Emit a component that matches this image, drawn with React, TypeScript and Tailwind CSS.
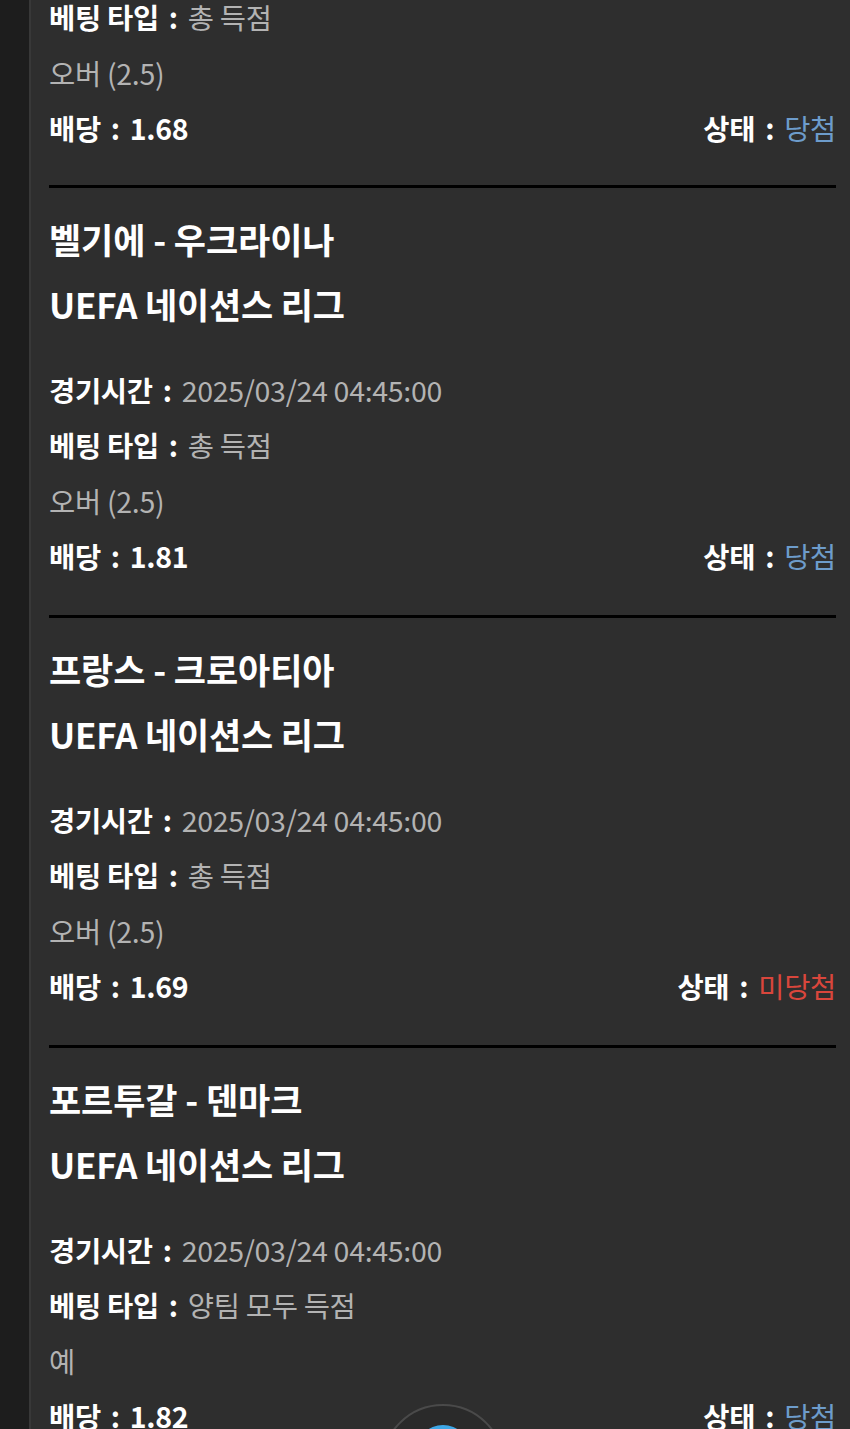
import React from 'react';

type Bet = {
  match: string;
  league: string;
  time: string;
  betType: string;
  pick: string;
  odds: string;
  won: boolean;
};

const bets: Bet[] = [
  {
    match: '벨기에 - 우크라이나',
    league: 'UEFA 네이션스 리그',
    time: '2025/03/24 04:45:00',
    betType: '총 득점',
    pick: '오버 (2.5)',
    odds: '1.81',
    won: true,
  },
  {
    match: '프랑스 - 크로아티아',
    league: 'UEFA 네이션스 리그',
    time: '2025/03/24 04:45:00',
    betType: '총 득점',
    pick: '오버 (2.5)',
    odds: '1.69',
    won: false,
  },
  {
    match: '포르투갈 - 덴마크',
    league: 'UEFA 네이션스 리그',
    time: '2025/03/24 04:45:00',
    betType: '양팀 모두 득점',
    pick: '예',
    odds: '1.82',
    won: true,
  },
];

// label + colon + value on one row
const Field = ({ label, value }: { label: string; value: string }) => (
  <div className="h-[55.5px] flex items-center">
    <span className="font-bold text-white">{label}</span>
    <span className="font-bold text-white mx-[10px]">:</span>
    <span className="text-[#b3b3b3]">{value}</span>
  </div>
);

const Footer = ({ odds, won }: { odds: string; won: boolean }) => (
  <div className="h-[55.5px] flex items-center justify-between">
    <div className="flex items-center">
      <span className="font-bold text-white">배당</span>
      <span className="font-bold text-white mx-[10px]">:</span>
      <span className="font-bold text-white">{odds}</span>
    </div>
    <div className="flex items-center">
      <span className="font-bold text-white">상태</span>
      <span className="font-bold text-white mx-[10px]">:</span>
      <span className={won ? 'text-[#6d9ccb]' : 'text-[#d9463c]'}>{won ? '당첨' : '미당첨'}</span>
    </div>
  </div>
);

const BetCard = ({ bet }: { bet: Bet }) => (
  <div>
    <div className="h-[3px] bg-black" />
    <div className="pt-[19.5px]">
      <div className="h-[65px] flex items-center text-[35px] font-bold text-white tracking-[-0.1px]">{bet.match}</div>
      <div className="h-[65px] flex items-center text-[35px] font-bold text-white tracking-[-0.2px]">{bet.league}</div>
    </div>
    <div className="pt-[25.5px] pb-[30px] text-[28.5px] tracking-[-0.3px]">
      <Field label="경기시간" value={bet.time} />
      <Field label="베팅 타입" value={bet.betType} />
      <div className="h-[55.5px] flex items-center text-[#b3b3b3]">{bet.pick}</div>
      <Footer odds={bet.odds} won={bet.won} />
    </div>
  </div>
);

export default function App() {
  return (
    <div
      className="relative w-[850px] h-[1429px] overflow-hidden bg-[#1d1d1d] flex"
      style={{ fontFamily: '"Noto Sans CJK KR", "Noto Sans", sans-serif' }}
    >
      <div className="w-[29px] shrink-0" />
      <div className="flex-1 bg-[#2e2e2e] border-l-2 border-[#383838] pl-[18px] pr-[14px]">
        {/* first card, scrolled partly out of view */}
        <div className="-mt-[10px] pb-[28px] text-[28.5px] tracking-[-0.3px]">
          <Field label="베팅 타입" value="총 득점" />
          <div className="h-[55.5px] flex items-center text-[#b3b3b3]">오버 (2.5)</div>
          <Footer odds="1.68" won={true} />
        </div>
        {bets.map((bet, i) => (
          <BetCard key={i} bet={bet} />
        ))}
      </div>

      {/* floating button peeking from the bottom */}
      <div className="absolute left-[381px] top-[1404px] w-[124px] h-[124px] rounded-full bg-[#2a2a2a] border-2 border-[#4a4a4a] flex justify-center">
        <div className="mt-[19px] w-[54px] h-[54px] rounded-full bg-[#3ea7e6]" />
      </div>
    </div>
  );
}
